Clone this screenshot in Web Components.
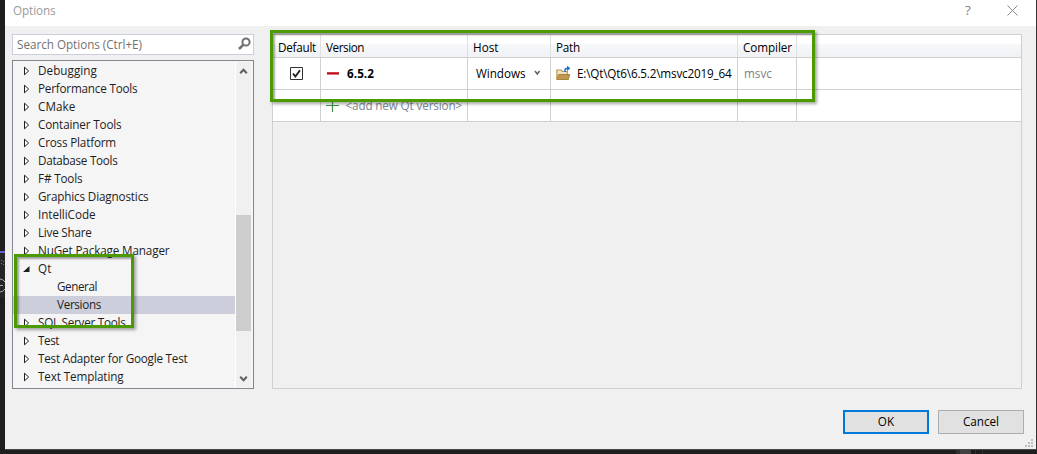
<!DOCTYPE html>
<html lang="en"><head><meta charset="utf-8"><title>Options</title>
<style>
html,body{margin:0;width:1037px;height:454px;overflow:hidden;background:#1e1e1e}
body{font:11.7px/18px "Open Sans","Noto Sans",sans-serif;color:#1e1e1e}
</style></head><body>
<options-dialog></options-dialog>
<script>
const define=(name,html,init)=>customElements.define(name,class extends HTMLElement{
  connectedCallback(){
    if(this.shadowRoot)return;
    this.attachShadow({mode:'open'}).innerHTML=html;
    if(init)init(this,this.shadowRoot);
  }
});

// A single-line label tracked to a given width
define('fit-text',`<style>:host{display:inline-block;white-space:pre;flex:none}span{display:inline-block}</style><span><slot></slot></span>`,(el,r)=>{
  const s=r.querySelector('span'),w=+el.getAttribute('w');
  if(w){const n=el.textContent.length;s.style.letterSpacing=((w-s.getBoundingClientRect().width)/n)+'px';el.style.width=w+'px'}
});

define('tree-item',`<style>
:host{display:flex;height:18px;align-items:center;padding-left:10px;box-sizing:border-box}
:host([child]){padding-left:44px}:host([selected]){background:#cccedb}
svg{width:8px;height:10px;margin-right:7px;flex:none;display:block}
slot{display:block;padding-bottom:2px}
:host([child]) svg{display:none}
.open{display:none}:host([open]) .open{display:block}:host([open]) .shut{display:none}
</style><svg class="shut" viewBox="0 0 8 10"><path d="M1.5 1.2v7.6L5.6 5z" fill="#fff" stroke="#1e1e1e"/></svg>
<svg class="open" viewBox="0 0 8 10"><path d="M6.5 2v6H0z" fill="#1e1e1e"/></svg><slot></slot>`);

define('scroll-bar',`<style>
:host{display:flex;flex-direction:column;width:15px;height:325px;background:#f0f0f0;border-left:1px solid #fff;margin:1px 1px 0 0;flex:none}
svg{width:15px;height:18px;flex:none}.thumb{height:116px;background:#cdcdcd}.top{height:135px}.bottom{flex:1}
path{fill:none;stroke:#606060;stroke-width:2}
</style><svg viewBox="0 0 15 18"><path d="M4.2 11.3 7.5 7.8l3.3 3.5"/></svg><div class="top"></div><div class="thumb"></div><div class="bottom"></div><svg viewBox="0 0 15 18"><path d="M4.2 7.8 7.5 11.3l3.3-3.5"/></svg>`);

const tree=[['Debugging',59],['Performance Tools',99.5],['CMake',37.5],['Container Tools',83.5],['Cross Platform',78],['Database Tools',79.5],['F# Tools',44.5],['Graphics Diagnostics',110.5],['IntelliCode',57.5],['Live Share',53.5],['NuGet Package Manager',131.5],['Qt',13.5,'open'],['General',40,'child'],['Versions',44,'child selected'],['SQL Server Tools',87.5],['Test',21],['Test Adapter for Google Test',149.5],['Text Templating',85.5]];
define('options-tree',`<style>
:host{display:flex;box-sizing:border-box;width:242px;height:329px;margin-top:5px;border:1px solid #828790;background:#f5f5f5}
.items{width:222px;padding-top:1px}scroll-bar{margin-left:0}
</style><div class="items">${tree.map(([t,w,a=''])=>`<tree-item ${a}><fit-text w="${w}">${t}</fit-text></tree-item>`).join('')}</div><scroll-bar></scroll-bar>`);

define('search-box',`<style>
:host{display:flex;box-sizing:border-box;width:242px;height:21px;border:1px solid #cccedb;background:#fff;color:#717171;align-items:center;justify-content:space-between;padding:0 1px 2px 4px}
svg{width:15px;height:15px}
</style><fit-text w="125">Search Options (Ctrl+E)</fit-text><svg viewBox="0 0 15 15" fill="none" stroke="#717171"><circle cx="9" cy="6" r="3.6" stroke-width="2"/><path d="M6.2 8.8 2 13" stroke-width="2.5"/></svg>`);

define('versions-grid',`<style>
:host{display:block;box-sizing:border-box;width:750px;height:355px;border:1px solid #d0d0d0;color:#000}
.row{display:grid;grid-template-columns:48px 147px 83px 187px 59px 1fr;height:31px;border-bottom:1px solid #d0d0d0;background:#fff}
.row>div{display:flex;align-items:center;border-right:1px solid #d0d0d0;min-width:0;box-sizing:border-box}
.row>div:last-child{border-right:0}
.row fit-text{margin-bottom:2px}
.head{height:22px;background:linear-gradient(#fff 0 9px,#f7f8fa 9px,#f0f1f4)}
.head>div{padding:1px 0 0 5px;border-color:#dedfe1}
.head fit-text{margin-bottom:0}
svg{display:block;flex:none}.version{padding-left:6px}
</style>
<div class="row head"><div><fit-text w="38">Default</fit-text></div><div><fit-text w="38">Version</fit-text></div><div><fit-text w="25.5">Host</fit-text></div><div><fit-text w="24">Path</fit-text></div><div><fit-text w="49">Compiler</fit-text></div><div></div></div>
<div class="row"><div style="padding-left:17px"><svg width="13" height="13"><path d="M.5.5h12v12H.5z" fill="#fff" stroke="#333"/><path d="m3 6.5 2.4 3L10 3.2" fill="none" stroke="#212121" stroke-width="1.9"/></svg></div>
<div class="version"><svg width="13" height="5"><path d="M0 1h12v3H0z" fill="#d6757d"/><path d="M0 1.5h12v1.5H0z" fill="#c50b17"/></svg><fit-text w="27" style="font-weight:700;margin-left:7px">6.5.2</fit-text></div>
<div style="padding-left:8px"><fit-text w="49.5">Windows</fit-text><svg width="7" height="6" style="margin-left:8px;margin-bottom:2px"><path d="m1 1 2.3 3L5.6 1" fill="none" stroke="#606060" stroke-width="1.5"/></svg></div>
<div style="padding-left:5px"><svg width="16" height="15" viewBox="0 0 16 15"><path d="M.9 13V4h4.4l1 1.5h5v3" fill="#f0e4c8" stroke="#b8964e" stroke-width="1.2"/><path d="M2.8 8.5h10.8l-1.2 5H.8z" fill="#c09a50" stroke="#a98235"/><path d="M9 6V4q0-1.7 3-1.7" fill="none" stroke="#1c73c7" stroke-width="1.5"/><path d="m11-.3 3.4 2.6-3.4 2.6z" fill="#1c73c7"/></svg><fit-text w="154.5" style="margin-left:5px">E:\\Qt\\Qt6\\6.5.2\\msvc2019_64</fit-text></div>
<div style="padding-left:6px;color:#808080"><fit-text w="28">msvc</fit-text></div><div></div></div>
<div class="row"><div></div><div style="padding-left:5px;color:#7c8797"><svg width="13" height="13" style="margin-bottom:1px"><path d="M0 6.5h13M6.5 0v13" stroke="#43924a" stroke-width="1.2"/></svg><fit-text w="116.5" style="margin-left:6.5px;margin-bottom:1px">&lt;add new Qt version&gt;</fit-text></div><div></div><div></div><div></div><div></div></div>`);

define('dialog-button',`<style>
:host{display:flex;box-sizing:border-box;width:86px;height:24px;align-items:center;justify-content:center;background:#e1e1e1;border:1px solid #adadad;color:#000}
:host([default]){border:2px solid #0078d7}
slot{display:block;padding-bottom:2px}
</style><slot></slot>`);

// Green callout frame laid over the dialog
define('mark-frame',`<style>:host{position:absolute;box-sizing:border-box;border:3px solid #4b9b00;box-shadow:2px 2px 3px rgba(0,0,0,.35),inset 2px 2px 2px rgba(0,0,0,.35)}</style>`);

define('options-dialog',`<style>
:host{display:block;position:relative;width:1037px;height:454px;overflow:hidden;background:#1e1e1e}
.dialog{box-sizing:border-box;margin-left:5px;width:1032px;height:450px;background:#f0f0f0;border-right:1px solid #333;border-bottom:1px solid #4a4a4a}
header{height:26px;background:#fff;color:#999;display:flex;align-items:center;padding:0 18px 6px 8px;box-sizing:border-box}
header svg{margin-left:auto}
.body{display:flex;gap:18px;padding:8px 0 0 7px}
footer{display:flex;justify-content:flex-end;gap:9px;padding:21px 12px 0 0}
.back{position:absolute;left:0;top:0}.grip{position:absolute;left:1025px;top:439px}
</style>
<div class="dialog"><header><fit-text w="42.5">Options</fit-text><fit-text w="6" style="margin-left:909.5px;font-size:13.5px;color:#808080">?</fit-text><svg width="11" height="11"><path d="m.5.5 10 10m0-10-10 10" stroke="#888" fill="none"/></svg></header>
<div class="body"><div><search-box></search-box><options-tree></options-tree></div><versions-grid></versions-grid></div>
<footer><dialog-button default><fit-text w="16.5">OK</fit-text></dialog-button><dialog-button><fit-text w="36">Cancel</fit-text></dialog-button></footer></div>
<svg class="back" width="1037" height="454"><path d="M0 251h5v2H0z" fill="#6b5bd0"/><path d="M0 253h5v45H0z" fill="#252526"/><path d="M1 260h1v1H1zm2 1h1v1H3zm-2 2h1v1H1zm2 1h1v1H3z" fill="#777"/><path d="M0 279q3 0 5 3M0 292q3 0 5-3M0 285.5h3" stroke="#aaa" fill="none"/><path d="M0 450h1037v4H0z" fill="#1e1e1e"/><path d="M956 450h4v4h-4zm19 0h1v4h-1zm7 0h1v4h-1z" fill="#303030"/><path d="M960 450h11v4h-11z" fill="#424242"/></svg>
<svg class="grip" width="9" height="9"><path d="M6 0h2v2H6zM3 3h2v2H3zm3 0h2v2H6zM0 6h2v2H0zm3 0h2v2H3zm3 0h2v2H6z" fill="#bfbfbf"/></svg>
<mark-frame style="left:270px;top:30px;width:545px;height:72px"></mark-frame><mark-frame style="left:14px;top:254px;width:120px;height:74px"></mark-frame>`);
</script></body></html>
